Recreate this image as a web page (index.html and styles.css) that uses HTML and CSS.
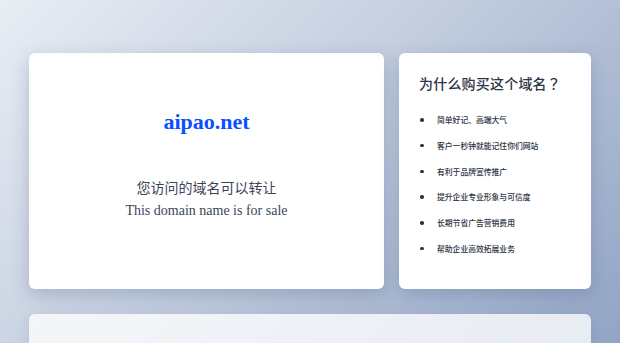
FILE: index.html
```html
<!DOCTYPE html>
<html>
<head>
  <meta charset="UTF-8">
  <title>aipao.net</title>
  <link rel="stylesheet" href="styles.css">
</head>
<body>
<div class="page">
  <div class="cards">
    <div class="card sale">
      <h1 class="domain">aipao.net</h1>
      <p class="sale-cn">您访问的域名可以转让</p>
      <p class="sale-en">This domain name is for sale</p>
    </div>
    <div class="card why">
      <h2>为什么购买这个域名<span class="qmark">？</span></h2>
      <ul>
        <li>简单好记、高端大气</li>
        <li>客户一秒钟就能记住你们网站</li>
        <li>有利于品牌宣传推广</li>
        <li>提升企业专业形象与可信度</li>
        <li>长期节省广告营销费用</li>
        <li>帮助企业高效拓展业务</li>
      </ul>
    </div>
  </div>
  <div class="card contact"></div>
</div>
</body>
</html>
```

FILE: styles.css
```css
html, body {
  margin: 0;
  height: 100%;
}
body {
  background: linear-gradient(135deg, #e9edf4 0%, #c0cbdd 50%, #92a4c5 100%);
  font-family: "Noto Sans CJK SC", "Noto Sans", sans-serif;
  overflow: hidden;
}
.page {
  padding: 53px 29px 0;
}
.cards {
  display: grid;
  grid-template-columns: 355px 1fr;
  gap: 15px;
}
.card {
  background: #fff;
  border-radius: 6px;
  box-shadow: 0 6px 18px rgba(70, 90, 130, .28);
}
.sale {
  height: 236px;
  box-sizing: border-box;
  padding-top: 56px;
  text-align: center;
  font-family: "Liberation Serif", "Noto Sans CJK SC", serif;
  color: #3b4457;
}
.domain {
  margin: 0;
  font-size: 22px;
  line-height: 26px;
  color: #0a50ff;
}
.sale-cn {
  margin: 40px 0 0;
  font-size: 14px;
  line-height: 24px;
  font-family: "Noto Sans CJK SC", sans-serif;
}
.sale-en {
  margin: 0;
  font-size: 14px;
  line-height: 24px;
}
.why {
  padding: 20px 20px 0;
  color: #2d3443;
}
.why h2 {
  margin: 0;
  font-size: 14px;
  line-height: 20px;
  font-weight: 500;
  letter-spacing: .2px;
}
.why h2 .qmark {
  font-family: "Noto Sans CJK TC", sans-serif;
}
.why ul {
  list-style: none;
  margin: 14px 0 0;
  padding: 0;
}
.why li {
  position: relative;
  padding-left: 18px;
  font-size: 7.8px;
  line-height: 25.8px;
  font-weight: 500;
  color: #2d3443;
}
.why li::before {
  content: "";
  position: absolute;
  left: 1px;
  top: 11px;
  width: 3.5px;
  height: 3.5px;
  border-radius: 50%;
  background: #2d3443;
}
.contact {
  margin-top: 25px;
  height: 120px;
  background: rgba(255, 255, 255, .78);
  box-shadow: 0 4px 14px rgba(70, 90, 130, .15);
}
```
